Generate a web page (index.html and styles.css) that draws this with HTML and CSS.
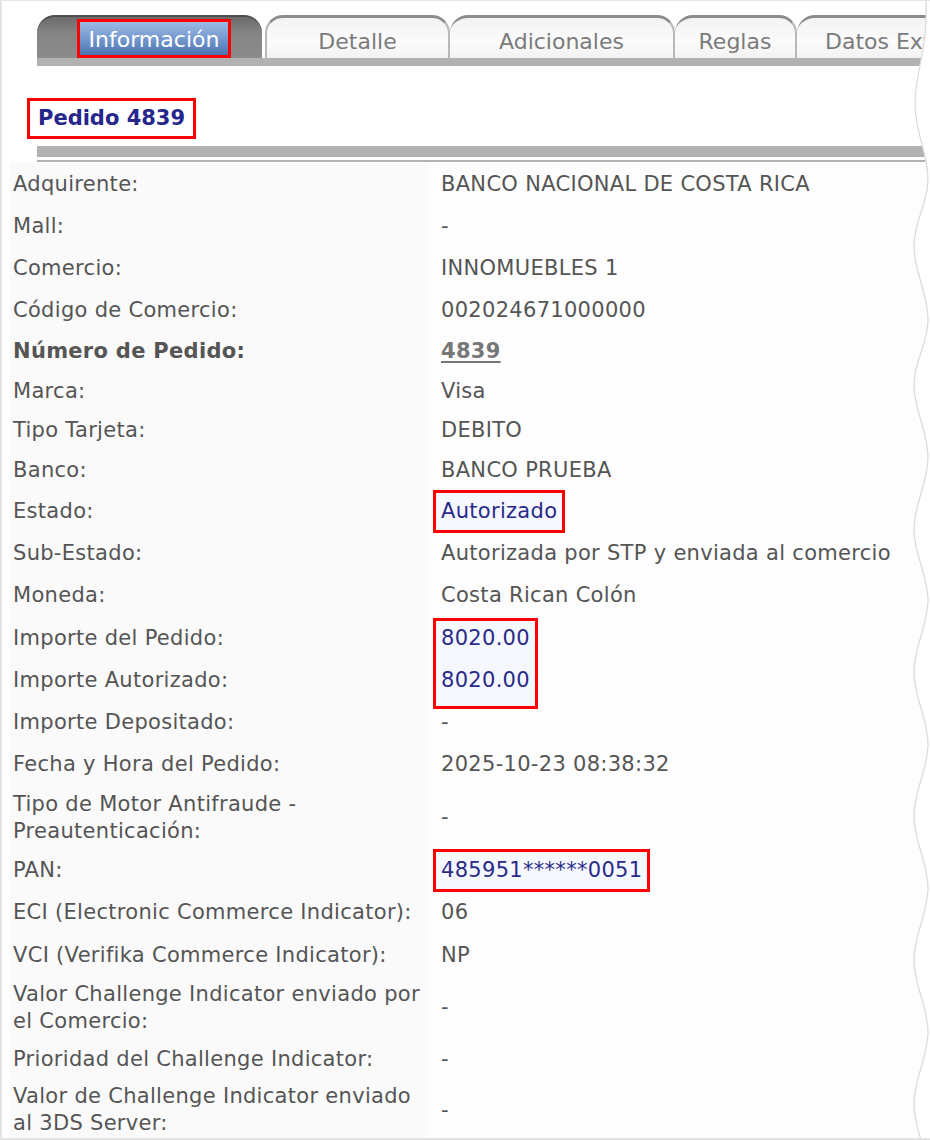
FILE: index.html
```html
<!DOCTYPE html>
<html lang="es">
<head>
<meta charset="utf-8">
<title>Pedido 4839</title>
<link rel="stylesheet" href="styles.css">
</head>
<body>
<div class="page">
  <nav class="tabs">
    <div class="tab tab-active"><span class="tab-label-active">Información</span></div>
    <div class="tab tab-detalle">Detalle</div>
    <div class="tab tab-adic">Adicionales</div>
    <div class="tab tab-reglas">Reglas</div>
    <div class="tab tab-datos">Datos Ext</div>
  </nav>
  <div class="tabline"></div>

  <h1 class="title"><span class="title-box">Pedido 4839</span></h1>
  <div class="bar-thick"></div>
  <div class="bar-thin"></div>

  <div class="details">
    <div class="row"><div class="lbl">Adquirente:</div><div class="val">BANCO NACIONAL DE COSTA RICA</div></div>
    <div class="row"><div class="lbl">Mall:</div><div class="val">-</div></div>
    <div class="row"><div class="lbl">Comercio:</div><div class="val">INNOMUEBLES 1</div></div>
    <div class="row row-mid"><div class="lbl">Código de Comercio:</div><div class="val">002024671000000</div></div>
    <div class="row row-mid"><div class="lbl lbl-bold">Número de Pedido:</div><div class="val"><a class="link" href="#">4839</a></div></div>
    <div class="row row-tight"><div class="lbl">Marca:</div><div class="val">Visa</div></div>
    <div class="row row-tight"><div class="lbl">Tipo Tarjeta:</div><div class="val">DEBITO</div></div>
    <div class="row row-tight"><div class="lbl">Banco:</div><div class="val">BANCO PRUEBA</div></div>
    <div class="row"><div class="lbl">Estado:</div><div class="val"><span class="hl">Autorizado</span></div></div>
    <div class="row"><div class="lbl">Sub-Estado:</div><div class="val">Autorizada por STP y enviada al comercio</div></div>
    <div class="row"><div class="lbl">Moneda:</div><div class="val">Costa Rican Colón</div></div>
    <div class="row"><div class="lbl">Importe del Pedido:</div><div class="val"><span class="hl hl-pair">8020.00</span></div></div>
    <div class="row"><div class="lbl">Importe Autorizado:</div><div class="val"><span class="hl-follow">8020.00</span></div></div>
    <div class="row"><div class="lbl">Importe Depositado:</div><div class="val">-</div></div>
    <div class="row"><div class="lbl">Fecha y Hora del Pedido:</div><div class="val">2025-10-23 08:38:32</div></div>
    <div class="row"><div class="lbl">Tipo de Motor Antifraude - Preautenticación:</div><div class="val">-</div></div>
    <div class="row"><div class="lbl">PAN:</div><div class="val"><span class="hl">485951******0051</span></div></div>
    <div class="row"><div class="lbl">ECI (Electronic Commerce Indicator):</div><div class="val">06</div></div>
    <div class="row"><div class="lbl">VCI (Verifika Commerce Indicator):</div><div class="val">NP</div></div>
    <div class="row"><div class="lbl">Valor Challenge Indicator enviado por el Comercio:</div><div class="val">-</div></div>
    <div class="row row-tight"><div class="lbl">Prioridad del Challenge Indicator:</div><div class="val">-</div></div>
    <div class="row"><div class="lbl">Valor de Challenge Indicator enviado al 3DS Server:</div><div class="val">-</div></div>
  </div>

  <svg class="torn" width="930" height="1140" viewBox="0 0 930 1140" aria-hidden="true">
    <path class="torn-fill" d="M926,-5 L926,20 C926,51 915,74 915,105 C915,132 928,153 928,180 C928,204 914,221 914,245 C914,272 928,293 928,320 C928,344 914,361 914,385 C914,411 928,431 928,457 C928,483 914,504 914,530 C914,555 928,575 928,600 C928,626 914,646 914,672 C914,698 928,718 928,744 C928,770 914,790 914,816 C914,842 928,862 928,888 C928,914 914,934 914,960 C914,986 928,1006 928,1032 C928,1058 914,1078 914,1104 C914,1130 928,1150 928,1176 L940,1176 L940,-5 Z"/>
    <path class="torn-edge" d="M926,-5 L926,20 C926,51 915,74 915,105 C915,132 928,153 928,180 C928,204 914,221 914,245 C914,272 928,293 928,320 C928,344 914,361 914,385 C914,411 928,431 928,457 C928,483 914,504 914,530 C914,555 928,575 928,600 C928,626 914,646 914,672 C914,698 928,718 928,744 C928,770 914,790 914,816 C914,842 928,862 928,888 C928,914 914,934 914,960 C914,986 928,1006 928,1032 C928,1058 914,1078 914,1104 C914,1130 928,1150 928,1176"/>
  </svg>
</div>
</body>
</html>
```

FILE: styles.css
```css
* { box-sizing: border-box; }

html, body {
  margin: 0;
  padding: 0;
  background: #ffffff;
}

body {
  font-family: "DejaVu Sans", Verdana, sans-serif;
  color: #555555;
  width: 930px;
  height: 1140px;
  overflow: hidden;
}

.page {
  position: relative;
  width: 930px;
  height: 1140px;
  border-top: 1px solid #e6e6e6;
  border-left: 2px solid #e3e3e3;
  border-bottom: 2px solid #e3e3e3;
  padding-top: 14px;
  overflow: hidden;
}

/* ---------- tabs ---------- */
.tabs {
  display: flex;
  margin-left: 35px;
  height: 43px;
  white-space: nowrap;
}

.tab {
  flex: none;
  height: 43px;
  display: flex;
  align-items: center;
  justify-content: center;
  font-size: 22px;
  color: #7b7b7b;
  padding-top: 6px;
  border-radius: 18px 18px 0 0;
  background: linear-gradient(#f3f3f3, #fbfbfb 60%, #f2f2f2);
  border-top: 3px solid #8c8c8c;
  border-left: 2px solid #b9b9b9;
  border-right: 2px solid #b9b9b9;
}

.tab-active {
  width: 225px;
  align-items: flex-start;
  background: linear-gradient(#6b6b6b, #858585 40%, #8c8c8c);
  border: none;
  border-top: 2px solid #4e4e4e;
  padding-top: 5px;
  margin-right: 3px;
}

.tab-label-active {
  display: inline-block;
  width: 148px;
  height: 33px;
  line-height: 36px;
  text-align: center;
  color: #ffffff;
  font-size: 22px;
  background: linear-gradient(#9dbae4, #7598cf 50%, #4c74b2);
  outline: 3px solid #ff0000;
  margin-left: 9px;
}

.tab-detalle { width: 185px; }
.tab-adic { width: 225px; border-left: none; }
.tab-reglas { width: 122px; border-left: none; }
.tab-datos { width: 180px; border-left: none; justify-content: flex-start; padding-left: 28px; }

.tabline {
  margin-left: 35px;
  height: 8px;
  background: #b2b2b2;
}

/* ---------- title ---------- */
.title {
  margin: 32px 0 0 25px;
  font-size: 21px;
  font-weight: bold;
  line-height: 29px;
  color: #26268c;
}

.title-box {
  display: inline-block;
  border: 3px solid #ff0000;
  padding: 3px 8px 3px 8px;
}

.bar-thick {
  margin: 7px 0 0 35px;
  height: 11px;
  background: #b2b2b2;
}

.bar-thin {
  margin: 3px 0 0 35px;
  height: 2px;
  background: #b2b2b2;
}

/* ---------- details ---------- */
.details {
  margin: 1px 0 0 8px;
  font-size: 21px;
  letter-spacing: 0.3px;
  line-height: 27px;
}

.row {
  display: grid;
  grid-template-columns: 417px 1fr;
  min-height: 42.3px;
}

.row-mid { min-height: 41px; }
.row-tight { min-height: 39.4px; }

.lbl,
.val {
  display: flex;
  align-items: center;
  padding-top: 4.6px;
  padding-bottom: 4.6px;
}

.lbl {
  background: #fafafa;
  padding-left: 3px;
}

.lbl-bold { font-weight: bold; }

.val {
  background: #fdfdfd;
  padding-left: 14px;
}

.link {
  color: #777777;
  font-weight: bold;
  text-decoration: underline;
  text-underline-offset: 3px;
}

.hl {
  position: relative;
  z-index: 0;
  display: inline-block;
  color: #2a2a8a;
}

.hl::before {
  content: "";
  position: absolute;
  left: -8px;
  right: -8px;
  top: -8px;
  bottom: -8px;
  border: 3px solid #ff0000;
  background: #f5f9ff;
  z-index: -1;
}

.hl-pair::before {
  top: -7px;
  bottom: auto;
  height: 85px;
}

.hl-follow {
  position: relative;
  z-index: 1;
  display: inline-block;
  color: #2a2a8a;
}

/* ---------- torn right edge ---------- */
.torn {
  position: absolute;
  left: -2px;
  top: -1px;
  pointer-events: none;
}

.torn-fill { fill: #ffffff; }

.torn-edge {
  fill: none;
  stroke: #d9d9d9;
  stroke-width: 1.2;
}
```
